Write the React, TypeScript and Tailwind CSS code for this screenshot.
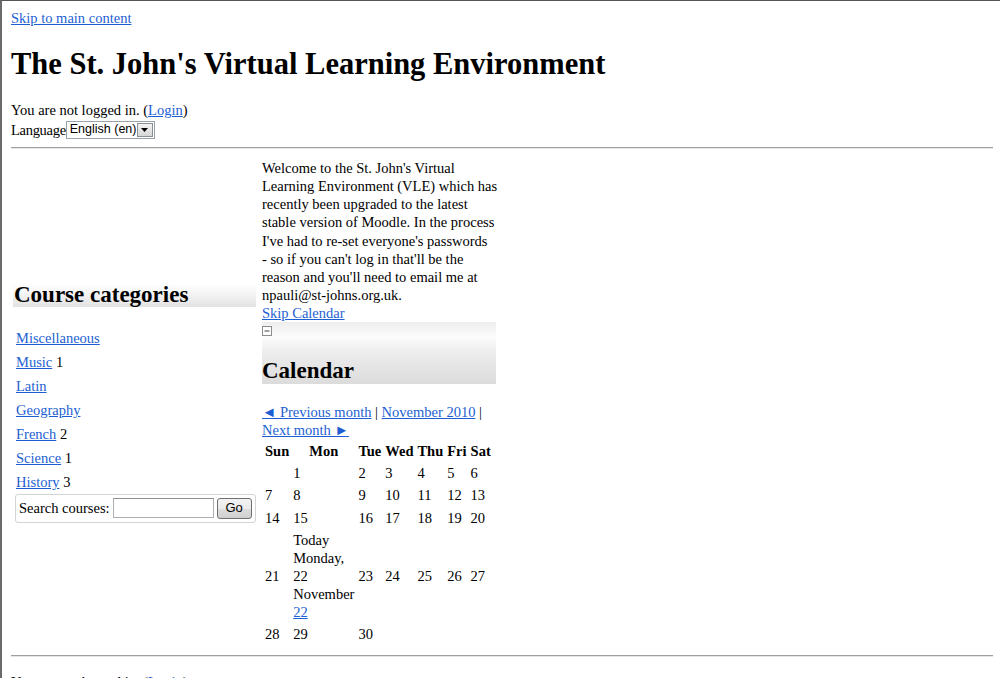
import React from "react";

const link = "text-[#1d5fd2] underline";

const categories: [string, string][] = [
  ["Miscellaneous", ""],
  ["Music", "1"],
  ["Latin", ""],
  ["Geography", ""],
  ["French", "2"],
  ["Science", "1"],
  ["History", "3"],
];

const welcomeLines = [
  "Welcome to the St. John's Virtual",
  "Learning Environment (VLE) which has",
  "recently been upgraded to the latest",
  "stable version of Moodle. In the process",
  "I've had to re-set everyone's passwords",
  "- so if you can't log in that'll be the",
  "reason and you'll need to email me at",
  "npauli@st-johns.org.uk.",
];

const TODAY = "today";

const weeks: string[][] = [
  ["", "1", "2", "3", "4", "5", "6"],
  ["7", "8", "9", "10", "11", "12", "13"],
  ["14", "15", "16", "17", "18", "19", "20"],
  ["21", TODAY, "23", "24", "25", "26", "27"],
  ["28", "29", "30", "", "", "", ""],
];

const days = ["Sun", "Mon", "Tue", "Wed", "Thu", "Fri", "Sat"];

function LanguageSelect() {
  return (
    <span className="inline-flex h-[18px] w-[89px] items-center whitespace-nowrap border border-[#9aa3ad] bg-white pl-[3px] pr-[1px] font-['Liberation_Sans',Arial,sans-serif] text-[12.5px] leading-none">
      <span className="flex-1 whitespace-nowrap">English (en)</span>
      <span className="flex h-[14px] w-[16px] shrink-0 items-center justify-center border border-[#8e8f8f] bg-[linear-gradient(to_bottom,#f4f4f4,#d6d6d6)]">
        <svg width="7" height="4" viewBox="0 0 7 4">
          <path d="M0 0h7L3.5 4z" fill="#000" />
        </svg>
      </span>
    </span>
  );
}

function CourseCategories() {
  return (
    <div className="w-[243px]">
      <h2 className="h-[24px] bg-[linear-gradient(to_bottom,#ffffff_0%,#f6f6f6_40%,#e2e2e2_100%)] pl-[1px] text-[23px] font-bold leading-[24px]">
        Course categories
      </h2>
      <ul className="mt-[19px] ml-[3px]">
        {categories.map(([name, count]) => (
          <li key={name} className="flex h-[24px] items-center">
            <a href="#" className={link}>
              {name}
            </a>
            {count && <span>&nbsp;{count}</span>}
          </li>
        ))}
      </ul>
      <div className="ml-[2px] flex h-[29px] w-[241px] items-center rounded-[3px] border border-[#d4d4d4] pl-[3px]">
        <span>Search courses:</span>
        <span className="ml-[3px] h-[20px] w-[101px] border border-[#abadb3] border-t-[#8e8f8f] bg-white" />
        <span className="ml-[3px] flex h-[21px] w-[35px] items-center justify-center rounded-[3px] border border-[#707070] bg-[linear-gradient(to_bottom,#f2f2f2_0%,#ebebeb_50%,#dddddd_51%,#cfcfcf_100%)] font-['Liberation_Sans',Arial,sans-serif] text-[13px]">
          Go
        </span>
      </div>
    </div>
  );
}

function Calendar() {
  return (
    <div>
      <div className="flex h-[62px] flex-col bg-[linear-gradient(to_bottom,#eeeeee_0%,#fcfcfc_25%,#ececec_50%,#dcdcdc_100%)]">
        <svg className="mt-[4px]" width="10" height="10" viewBox="0 0 10 10">
          <rect x="0.5" y="0.5" width="9" height="9" fill="#fff" stroke="#8c8c8c" />
          <path d="M2.5 5h5" stroke="#444" />
        </svg>
        <h2 className="mt-[22px] text-[23px] font-bold leading-[26px]">Calendar</h2>
      </div>
      <div className="mt-[19px]">
        <a href="#" className={link}>
          ◄ Previous month
        </a>{" "}
        |{" "}
        <a href="#" className={link}>
          November 2010
        </a>{" "}
        |{" "}
        <a href="#" className={link}>
          Next month ►
        </a>
      </div>
      <table className="border-separate border-spacing-[2px]">
        <thead>
          <tr>
            {days.map((d) => (
              <th key={d} className="p-[1px] text-center font-bold">
                {d}
              </th>
            ))}
          </tr>
        </thead>
        <tbody>
          {weeks.map((w, i) => (
            <tr key={i}>
              {w.map((d, j) => (
                <td key={j} className="whitespace-nowrap p-[1px] text-left align-middle">
                  {d === TODAY ? (
                    <>
                      <span className="block">Today</span>
                      <span className="block">Monday,</span>
                      <span className="block">22</span>
                      <span className="block">November</span>
                      <a href="#" className={`block ${link}`}>
                        22
                      </a>
                    </>
                  ) : (
                    d
                  )}
                </td>
              ))}
            </tr>
          ))}
        </tbody>
      </table>
    </div>
  );
}

function Rule({ className }: { className: string }) {
  return <div className={`h-[2px] border-t border-b border-t-[#a0a0a0] border-b-[#e6e6e6] ${className}`} />;
}

export default function App() {
  return (
    <div className="min-h-[678px] overflow-hidden border-t border-l-2 border-t-[#555555] border-l-[#6a6a6a] bg-white pt-[8px] pl-[9px] pr-[7px] font-['Liberation_Serif','Times_New_Roman',serif] text-[14.5px] leading-[18.1px] text-black">
      <a href="#" className={link}>
        Skip to main content
      </a>
      <h1 className="mt-[20px] mb-[19px] text-[30.5px] font-bold leading-[35px]">
        The St. John's Virtual Learning Environment
      </h1>
      <div>
        You are not logged in. (
        <a href="#" className={link}>
          Login
        </a>
        )
      </div>
      <div className="flex h-[21px] items-center">
        <span className="tracking-[-0.3px]">Language</span>
        <LanguageSelect />
      </div>
      <Rule className="mt-[7px] mb-[10px]" />
      <div className="flex items-center">
        <div className="w-[251px] pl-[2px]">
          <CourseCategories />
        </div>
        <div className="w-[234px] self-start">
          <p className="whitespace-nowrap">
            {welcomeLines.map((line, i) => (
              <React.Fragment key={i}>
                {line}
                {i < welcomeLines.length - 1 && <br />}
              </React.Fragment>
            ))}
          </p>
          <a href="#" className={link}>
            Skip Calendar
          </a>
          <Calendar />
        </div>
      </div>
      <Rule className="mt-[9px] mb-[16px]" />
      <div>
        You are not logged in. (
        <a href="#" className={link}>
          Login
        </a>
        )
      </div>
    </div>
  );
}
